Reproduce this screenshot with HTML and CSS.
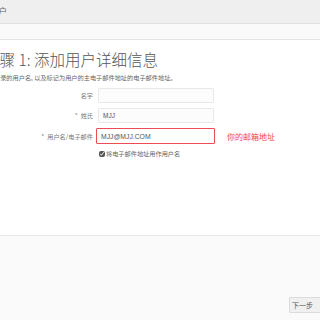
FILE: index.html
```html
<!DOCTYPE html>
<html lang="zh-CN">
<head>
    <meta charset="UTF-8">
    <title>添加用户</title>
    <link rel="stylesheet" href="styles.css">
</head>
<body>

    <div class="topbar">
        <span class="topbar-title">添加用户</span>
    </div>
    <div class="substrip"></div>

    <div class="content">
        <h1 class="step-title">步骤 1: 添加用户详细信息</h1>
        <p class="step-desc">登录的用户名, 以及标记为用户的主电子邮件地址的电子邮件地址。</p>

        <div class="form-grid">
            <label class="form-label">名字</label>
            <div class="field"><input type="text" class="input-field"></div>

            <label class="form-label"><span class="req">*</span>姓氏</label>
            <div class="field"><input type="text" class="input-field" value="MJJ"></div>

            <label class="form-label"><span class="req">*</span>用户名/电子邮件</label>
            <div class="field">
                <input type="text" class="input-field input-marked" value="MJJ@MJJ.COM">
                <span class="note">你的邮箱地址</span>
            </div>

            <span></span>
            <label class="check-row"><input type="checkbox" class="check" checked>将电子邮件地址用作用户名</label>
        </div>
    </div>

    <div class="footer">
        <button class="next-btn">下一步</button>
    </div>

</body>
</html>
```

FILE: styles.css
```css
body {
    margin: 0;
    font-family: "Noto Sans CJK SC", "Liberation Sans", sans-serif;
    color: #555;
    background: #fafafa;
    overflow: hidden;
}

/* page header, scrolled so only its tail shows */
.topbar {
    height: 23px;
    background: #efefef;
    border-bottom: 1px solid #e0e0e0;
    overflow: hidden;
}

.topbar-title {
    display: block;
    margin-left: -27px;
    font-size: 8.5px;
    line-height: 21px;
    color: #666;
}

.substrip {
    height: 15px;
    background: #fafafa;
    border-bottom: 1px solid #e4e4e4;
}

.content {
    height: 195px;
    background: #fff;
    border-bottom: 1px solid #e6e6e6;
    overflow: hidden;
}

.step-title {
    margin: 9px 0 0 -16px;
    font-size: 15.5px;
    line-height: 20px;
    font-weight: 300;
    color: #555;
    white-space: nowrap;
}

.step-desc {
    margin: 5px 0 0 -6px;
    font-size: 6.2px;
    line-height: 8px;
    color: #666;
    white-space: nowrap;
}

/* form */
.form-grid {
    display: grid;
    grid-template-columns: 93px 1fr;
    column-gap: 5px;
    row-gap: 5px;
    margin-top: 6px;
    align-items: center;
}

.form-label {
    text-align: right;
    font-size: 6.2px;
    color: #777;
    white-space: nowrap;
}

.req {
    margin-right: 3px;
    color: #888;
}

.field {
    display: flex;
    align-items: center;
}

.input-field {
    box-sizing: border-box;
    width: 116px;
    height: 15px;
    margin: 0;
    padding: 0 4px;
    border: 1px solid #e8e8e8;
    border-radius: 1px;
    background: #fcfcfc;
    font-family: "Liberation Sans", sans-serif;
    font-size: 6.5px;
    color: #555;
}

.input-marked {
    width: 119px;
    height: 16px;
    margin-left: -2px;
    border: 1.5px solid #ee4c55;
    background: #fff;
    font-size: 6.8px;
}

.note {
    margin-left: 12px;
    font-size: 8px;
    color: #f0454f;
}

.check-row {
    display: flex;
    align-items: center;
    font-size: 6.2px;
    color: #666;
    white-space: nowrap;
}

.check {
    width: 6px;
    height: 6px;
    margin: 0 1px;
    accent-color: #555;
}

.footer {
    height: 84px;
    display: flex;
    justify-content: flex-end;
    align-items: flex-end;
}

.next-btn {
    box-sizing: border-box;
    width: 33px;
    height: 16px;
    margin: 0 -2px 7px 0;
    padding: 0 0 0 2px;
    text-align: left;
    border: 1px solid #dcdcdc;
    border-radius: 1px;
    background: #f0f0f0;
    font-family: "Noto Sans CJK SC", sans-serif;
    font-size: 7px;
    color: #555;
}
```
